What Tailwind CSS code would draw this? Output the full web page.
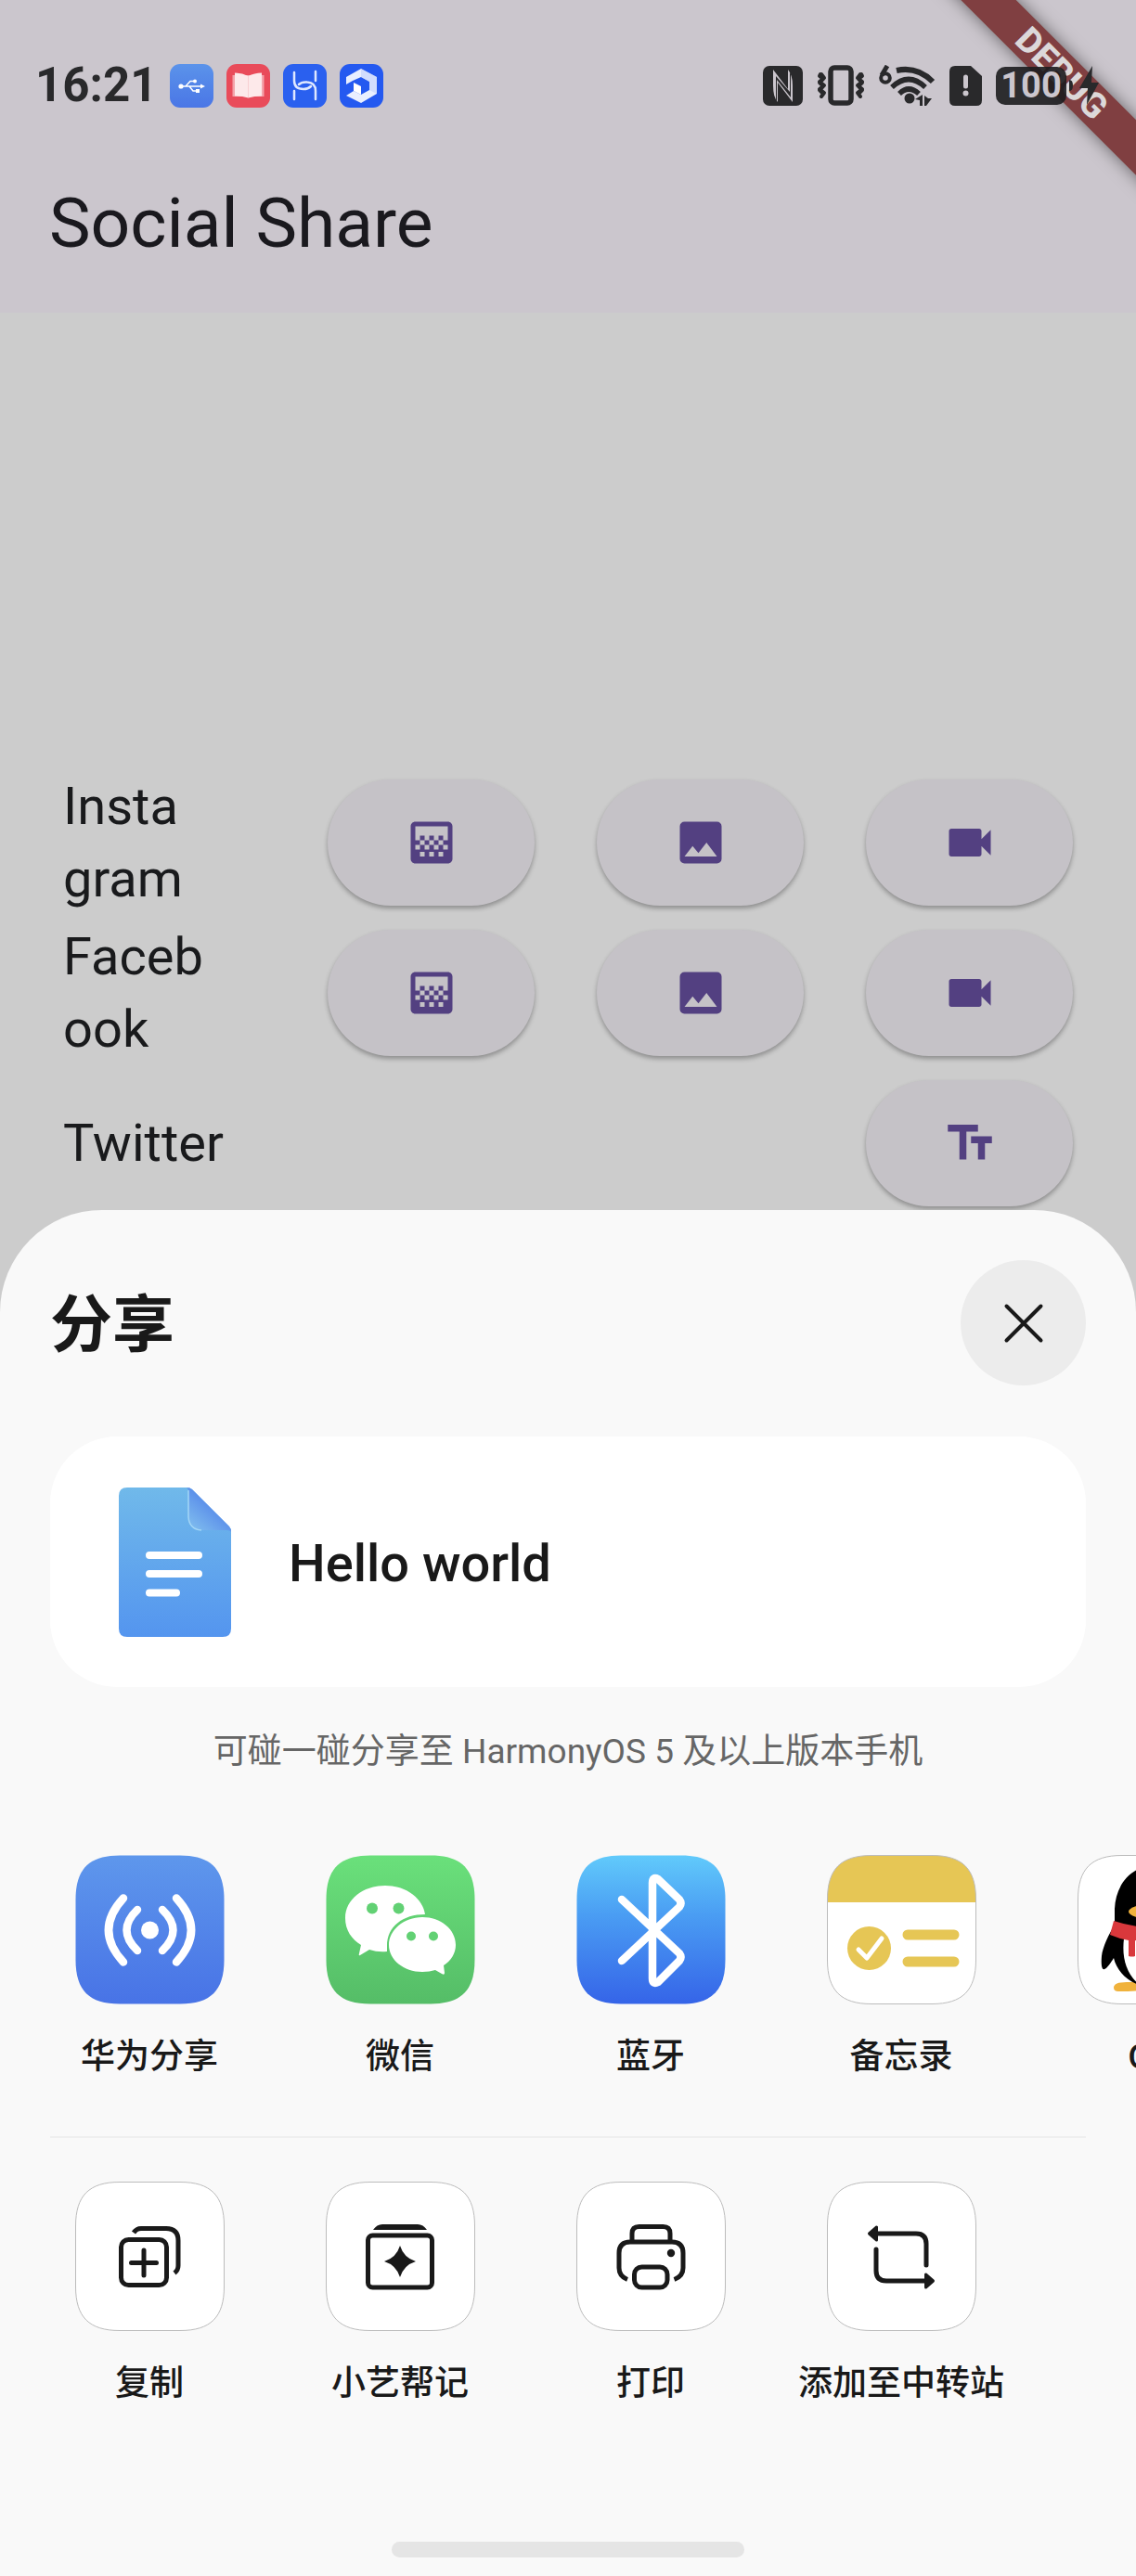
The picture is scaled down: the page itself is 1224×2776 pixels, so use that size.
<!DOCTYPE html>
<html lang="zh-CN">
<head>
<meta charset="utf-8">
<meta name="viewport" content="width=device-width, initial-scale=1">
<title>Social Share</title>
<script src="https://cdn.jsdelivr.net/npm/@tailwindcss/browser@4"></script>
</head>
<body class="relative flex min-h-screen flex-col overflow-x-hidden bg-[#cccccc] font-['Roboto','Noto_Sans_CJK_SC',sans-serif] text-[#191a1c]">

<!-- Shared icon shapes -->
<svg class="hidden" aria-hidden="true">
  <symbol id="i-gradient" viewBox="0 0 24 24"><path fill="currentColor" d="M11 9h2v2h-2zm-2 2h2v2H9zm4 0h2v2h-2zm2-2h2v2h-2zM7 9h2v2H7zm12-6H5c-1.100 0-2 .9-2 2v14c0 1.100.9 2 2 2h14c1.100 0 2-.9 2-2V5c0-1.100-.9-2-2-2zM9 18H7v-2h2v2zm4 0h-2v-2h2v2zm4 0h-2v-2h2v2zm2-7h-2v2h2v2h-2v-2h-2v2h-2v-2h-2v2H9v-2H7v2H5v-2h2v-2H5V5h14v6z"/></symbol>
  <symbol id="i-image" viewBox="0 0 24 24"><path fill="currentColor" d="M19 3H5a2 2 0 0 0-2 2v14a2 2 0 0 0 2 2h14a2 2 0 0 0 2-2V5a2 2 0 0 0-2-2zM5 18l3.500-4.500 2.500 3 3.500-4.500 4.500 6z"/></symbol>
  <symbol id="i-video" viewBox="0 0 24 24"><path fill="currentColor" d="M17 10.500V7c0-.55-.45-1-1-1H4c-.55 0-1 .45-1 1v10c0 .55.45 1 1 1h12c.55 0 1-.45 1-1v-3.500l4 4v-11l-4 4z"/></symbol>
  <symbol id="i-size" viewBox="0 0 24 24"><path fill="currentColor" d="M2.500 4v3h5v12h3V7h5V4h-13zm19 5h-9v3h3v7h3v-7h3V9z"/></symbol>
</svg>

<header class="bg-[#cbc6cd]">
  <div class="relative z-20 flex h-[184px] items-center justify-between pl-[38px] pr-[40px] text-[#29292b]">
    <div class="flex items-center gap-[14px]">
      <time class="w-[131px] text-[51px] font-bold leading-[60px]">16:21</time>
      <svg class="size-[47px]" viewBox="0 0 47 47"><defs><linearGradient id="usb" x2="0" y2="1"><stop stop-color="#5b93ea"/><stop offset="1" stop-color="#4a76e6"/></linearGradient></defs><rect width="47" height="47" rx="11" fill="url(#usb)"/><g fill="none" stroke="#fff" stroke-width="1.500"><path d="M11 24h24M17 24l5-5.500h5M21 24l4 5h5"/></g><circle cx="12" cy="24" r="2.600" fill="#fff"/><circle cx="27" cy="18.500" r="2" fill="#fff"/><path d="M28 27h4v4h-4zM33 21.500l5 2.500-5 2.500z" fill="#fff"/></svg>
      <svg class="size-[47px]" viewBox="0 0 47 47"><rect width="47" height="47" rx="11" fill="#e94b5a"/><path fill="#f4a3aa" d="M6.500 12h34v23h-34z"/><path fill="#fde9ea" d="M9 9.500q8 0 14.500 3.500 6.500-3.500 14.500-3.500v25q-8 0-14.500 2-6.500-2-14.500-2z"/><path stroke="#f8cfd2" d="M23.500 13v23"/></svg>
      <svg class="size-[47px]" viewBox="0 0 47 47"><rect width="47" height="47" rx="11" fill="#2a60ef"/><path fill="none" stroke="#dfe8ff" stroke-width="2.500" stroke-linecap="round" d="M12 9v9q0 9 10 9 5 0 8-3M35 8v10M12 38v-9M35 38v-9q0-9-9-9.500-6-.5-9 2.500"/></svg>
      <svg class="size-[47px]" viewBox="0 0 47 47"><rect width="47" height="47" rx="11" fill="#2459f0"/><path fill="#e9efff" d="M7 14 23 5l17 9v18l-17 10-16-8 8-5 8 4 9-5V19l-9-5-9 4-7 4z"/><path fill="#b9cbfb" d="M23 5v9l9 5v9l8 4V14z" opacity=".5"/><path fill="#fff" d="m15 20 8 4v9l-8-4z"/></svg>
    </div>
    <div class="flex items-center gap-[15px]">
      <svg class="h-[43px] w-[43px]" viewBox="0 0 43 43"><rect width="43" height="43" rx="7" fill="currentColor"/><path fill="#cbc6cd" d="M11 4 27 25V4q5 6 5 17v18L16 18v21q-5-5-5-18z"/><path fill="currentColor" d="M14 11v26l1 1V15l15 19V9l-1-3v22z"/></svg>
      <svg class="h-[44px] w-[52px]" viewBox="0 0 52 44"><rect x="15" y="3" width="22" height="38" rx="4" fill="none" stroke="currentColor" stroke-width="5.500"/><path fill="none" stroke="currentColor" stroke-width="4" stroke-linejoin="round" stroke-linecap="round" d="m5 10 3 4-5 4 5 4-5 4 5 4-3 4M47 10l-3 4 5 4-5 4 5 4-5 4 3 4M4 10l-1 2 4 3-4 4 4 4-4 4 4 4-2 3M48 10l1 2-4 3 4 4-4 4 4 4-4 4 2 3"/></svg>
      <svg class="h-[44px] w-[61px]" viewBox="0 0 61 44"><g fill="none" stroke="currentColor" stroke-width="5"><path d="M9 1 3 11"/><circle cx="7" cy="14" r="4.800" stroke-width="4"/><path d="M19 6q22-5 39 12" stroke-width="6"/><path d="M14 24q18-17 36 0" stroke-width="5.500"/><path d="M22 31q10-10 21 0" stroke-width="5.500"/></g><circle cx="33" cy="36" r="5.500" fill="currentColor"/><path fill="currentColor" d="m39 37 8-5v12h-3v-6zM49 33v11h2l6-8h-4z"/></svg>
      <svg class="h-[43px] w-[35px]" viewBox="0 0 35 43"><path fill="currentColor" d="M6 0h17l12 11v26q0 6-6 6H6q-6 0-6-6V6q0-6 6-6z"/><path stroke="#cbc6cd" stroke-width="5" stroke-linecap="round" d="M17.500 12v10"/><circle cx="17.500" cy="29.500" r="3" fill="#cbc6cd"/></svg>
      <div class="flex items-center gap-[3px]">
        <span class="flex h-[41px] w-[76px] items-center justify-center rounded-[10px] bg-[#1c1c1e]/90 text-[38px] font-bold leading-none text-[#cbc6cd]">100</span>
        <svg class="h-[42px] w-[32px]" viewBox="0 0 32 42"><path fill="currentColor" d="M0 15q4 0 4 6t-4 6zM25 0 11 24h9l-1 18 13-24h-8z"/></svg>
      </div>
    </div>
  </div>
  <h1 class="flex h-[153px] items-center pb-[40px] pl-[53px] text-[75px] leading-[107px] text-[#1a191e]">Social Share</h1>
</header>

<!-- Corner ribbon -->
<div class="absolute right-0 top-0 z-10 size-[240px] overflow-hidden">
  <div class="absolute -right-[80px] top-[58px] flex h-[42px] w-[320px] rotate-45 items-center justify-center bg-[#803f41] text-[38px] font-extrabold leading-none text-[#dcd8d9] shadow-[0_0_18px_rgba(0,0,0,0.5)]">DEBUG</div>
</div>

<main class="flex flex-col px-[68px] pt-[490px] text-[56px] leading-[78px]">
  <section class="grid h-[162px] grid-cols-[218px_repeat(3,1fr)] items-center gap-x-[67px]">
    <h2>Insta<br>gram</h2>
    <button aria-label="Instagram gradient" class="flex h-[136px] items-center justify-center rounded-full bg-[#c5c2c7] text-[#534081] shadow-[0_3px_5px_rgba(0,0,0,0.3)]"><svg class="size-[60px]"><use href="#i-gradient"/></svg></button>
    <button aria-label="Instagram image" class="flex h-[136px] items-center justify-center rounded-full bg-[#c5c2c7] text-[#534081] shadow-[0_3px_5px_rgba(0,0,0,0.3)]"><svg class="size-[60px]"><use href="#i-image"/></svg></button>
    <button aria-label="Instagram video" class="flex h-[136px] items-center justify-center rounded-full bg-[#c5c2c7] text-[#534081] shadow-[0_3px_5px_rgba(0,0,0,0.3)]"><svg class="size-[60px]"><use href="#i-video"/></svg></button>
  </section>
  <section class="grid h-[162px] grid-cols-[218px_repeat(3,1fr)] items-center gap-x-[67px]">
    <h2>Faceb<br>ook</h2>
    <button aria-label="Facebook gradient" class="flex h-[136px] items-center justify-center rounded-full bg-[#c5c2c7] text-[#534081] shadow-[0_3px_5px_rgba(0,0,0,0.3)]"><svg class="size-[60px]"><use href="#i-gradient"/></svg></button>
    <button aria-label="Facebook image" class="flex h-[136px] items-center justify-center rounded-full bg-[#c5c2c7] text-[#534081] shadow-[0_3px_5px_rgba(0,0,0,0.3)]"><svg class="size-[60px]"><use href="#i-image"/></svg></button>
    <button aria-label="Facebook video" class="flex h-[136px] items-center justify-center rounded-full bg-[#c5c2c7] text-[#534081] shadow-[0_3px_5px_rgba(0,0,0,0.3)]"><svg class="size-[60px]"><use href="#i-video"/></svg></button>
  </section>
  <section class="grid h-[153px] grid-cols-[218px_repeat(3,1fr)] gap-x-[67px] pt-[13px]">
    <h2 class="pt-[29px]">Twitter</h2>
    <button aria-label="Twitter text" class="col-start-4 flex h-[136px] items-center justify-center rounded-full bg-[#c5c2c7] text-[#534081] shadow-[0_3px_5px_rgba(0,0,0,0.3)]"><svg class="size-[60px]"><use href="#i-size"/></svg></button>
  </section>
</main>

<!-- Share sheet -->
<section aria-label="分享" class="relative flex grow flex-col rounded-t-[110px] bg-[#f9f9f9] pt-[54px] text-[#191919]">
  <div class="flex items-center justify-between px-[54px]">
    <h2 class="pt-1 text-[67px] font-bold leading-[96px]">分享</h2>
    <button aria-label="关闭" class="flex size-[135px] items-center justify-center rounded-full bg-[#ececec]"><svg class="size-[44px]" viewBox="0 0 44 44"><path stroke="currentColor" stroke-width="4" stroke-linecap="round" d="m3.500 3.500 37 37m0-37-37 37"/></svg></button>
  </div>

  <div class="mx-[54px] mt-[55px] flex h-[270px] items-center gap-[62px] rounded-[72px] bg-white pl-[74px]">
    <svg class="h-[161px] w-[121px]" viewBox="0 0 121 161"><defs><linearGradient id="doc" x2="0" y2="1"><stop stop-color="#70b9ea"/><stop offset="1" stop-color="#5495ef"/></linearGradient><linearGradient id="fold" x1=".1" y1=".9" x2=".55" y2=".4"><stop stop-color="#7fbcee"/><stop offset="1" stop-color="#5b8fea"/></linearGradient></defs><path fill="url(#doc)" d="M9 0h64q4 0 6 2l40 40q2 2 2 6v104q0 9-9 9H9q-9 0-9-9V9q0-9 9-9z"/><path fill="url(#fold)" d="M73 0q4 0 6 2l40 40q2 2 2 6-1-2-5-2H89q-14-1-14-14V5q0-4-2-5z"/><path fill="none" stroke="#a3d6f6" stroke-width="1.500" d="M75 3v29q1 13 14 14"/><path stroke="#fff" stroke-width="8" stroke-linecap="round" d="M33 73h53M33 93h53M33 113.500h29"/></svg>
    <p class="pt-1 text-[56px] font-medium leading-[78px]">Hello world</p>
  </div>

  <p class="mt-[44px] text-center text-[37px] leading-[52px] text-[#666666]">可碰一碰分享至 HarmonyOS 5 及以上版本手机</p>

  <nav aria-label="分享到应用" class="mt-[85px] flex overflow-hidden pl-[26px] text-[37px] font-medium leading-[54px]">
    <button class="flex w-[270px] shrink-0 flex-col items-center gap-[30px]">
      <svg class="size-[161px]" viewBox="0 0 161 161"><defs><linearGradient id="hw" x2="0" y2="1"><stop stop-color="#5e97ec"/><stop offset="1" stop-color="#4873e6"/></linearGradient></defs><path d="M48 .5h65C146 .5 160.500 15 160.500 48v65c0 33-14.500 47.500-47.500 47.500H48C15 160.500.5 146 .5 113V48C.5 15 15 .5 48 .5z" fill="url(#hw)"/><circle cx="80.500" cy="81" r="9.500" fill="#fff"/><path fill="none" stroke="#fff" stroke-width="8.500" stroke-linecap="round" d="M67 59q-23 22 0 44M94 59q23 22 0 44M52 46.500q-32 34.500 0 69M109 46.500q32 34.500 0 69"/></svg>
      <span>华为分享</span>
    </button>
    <button class="flex w-[270px] shrink-0 flex-col items-center gap-[30px]">
      <svg class="size-[161px]" viewBox="0 0 161 161"><defs><linearGradient id="wx" x2="0" y2="1"><stop stop-color="#6ae07b"/><stop offset="1" stop-color="#55bd67"/></linearGradient></defs><path d="M48 .5h65C146 .5 160.500 15 160.500 48v65c0 33-14.500 47.500-47.500 47.500H48C15 160.500.5 146 .5 113V48C.5 15 15 .5 48 .5z" fill="url(#wx)"/><path fill="#fff" d="M64 33c24 0 41 15 43 31-24 0-41 13-41 34v6q-10 1-19-2l-10 6q-2 1-1-2l2-9C28 91 21 81 21 68c0-20 19-35 43-35z"/><path fill="#fff" d="M104 67c20 0 36 13 36 30 0 9-5 17-13 22l1 8q0 3-3 1l-7-4q-6 2-14 2c-20 0-36-13-36-29s16-30 36-30z"/><g fill="#62d174"><circle cx="50" cy="57.500" r="6"/><circle cx="78.500" cy="57.500" r="6"/><circle cx="92" cy="87.500" r="5"/><circle cx="116" cy="87.500" r="5"/></g></svg>
      <span>微信</span>
    </button>
    <button class="flex w-[270px] shrink-0 flex-col items-center gap-[30px]">
      <svg class="size-[161px]" viewBox="0 0 161 161"><defs><linearGradient id="bt" x2="0" y2="1"><stop stop-color="#61cafb"/><stop offset=".4" stop-color="#4a9df3"/><stop offset="1" stop-color="#3564e8"/></linearGradient></defs><path d="M48 .5h65C146 .5 160.500 15 160.500 48v65c0 33-14.500 47.500-47.500 47.500H48C15 160.500.5 146 .5 113V48C.5 15 15 .5 48 .5z" fill="url(#bt)"/><path fill="none" stroke="#fff" stroke-width="8.500" stroke-linecap="round" stroke-linejoin="round" d="m49 48 62 58q3 4 0 8l-23 23q-6 3-6-4V30q0-7 6-4l23 22q3 4 0 8L49 114"/></svg>
      <span>蓝牙</span>
    </button>
    <button class="flex w-[270px] shrink-0 flex-col items-center gap-[30px]">
      <svg class="size-[161px]" viewBox="0 0 161 161"><defs><clipPath id="memo"><path d="M48 .5h65C146 .5 160.500 15 160.500 48v65c0 33-14.500 47.500-47.500 47.500H48C15 160.500.5 146 .5 113V48C.5 15 15 .5 48 .5z"/></clipPath></defs><g clip-path="url(#memo)"><path fill="#fff" d="M0 0h161v161H0z"/><path fill="#e6c655" d="M0 0h161v51H0z"/></g><circle cx="45.500" cy="100.500" r="23.500" fill="#e6c655"/><path fill="none" stroke="#fff" stroke-width="5" stroke-linecap="round" stroke-linejoin="round" d="m34 102 9 9 16-21"/><path stroke="#e6c655" stroke-width="11" stroke-linecap="round" d="M87 86h50M87 115h50"/><path d="M48 .5h65C146 .5 160.500 15 160.500 48v65c0 33-14.500 47.500-47.500 47.500H48C15 160.500.5 146 .5 113V48C.5 15 15 .5 48 .5z" fill="none" stroke="#bcbcbc"/></svg>
      <span>备忘录</span>
    </button>
    <button class="flex w-[270px] shrink-0 flex-col items-center gap-[30px]">
      <svg class="size-[161px]" viewBox="0 0 161 161"><path d="M48 .5h65C146 .5 160.500 15 160.500 48v65c0 33-14.500 47.500-47.500 47.500H48C15 160.500.5 146 .5 113V48C.5 15 15 .5 48 .5z" fill="#fff" stroke="#bcbcbc"/><path fill="#f0b23c" d="M53 137q-14 0-14 6 0 4 5 4 24 0 36-3 12 3 36 3 5 0 5-4 0-6-14-6z"/><path fill="#000" d="M81 12c-24 0-40 21-41 46v17c-6 10-13 24-14 34-1 12 1 15 3 14 3-1 7-7 10-12 4 17 20 31 42 32 22-1 38-15 42-32 3 5 7 11 10 12 2 1 4-2 3-14-1-10-8-24-14-34V58c-1-25-17-46-41-46z"/><path fill="#fff" d="M50 90q-4 34 18 51h26q22-17 18-51z"/><path fill="#d9383c" d="M39 71q42 14 84 0l5 15q-34 17-66 6v17q-3 1-7 0V92q-11-2-20-6z"/><ellipse cx="81" cy="61" rx="26" ry="8" fill="#f0b23c"/></svg>
      <span>QQ</span>
    </button>
  </nav>

  <hr class="mx-[54px] mt-[58px] border-t-2 border-[#efefef]">

  <nav aria-label="更多操作" class="mt-[47px] flex overflow-hidden pl-[26px] text-[37px] font-medium leading-[54px]">
    <button class="flex w-[270px] shrink-0 flex-col items-center gap-[30px]">
      <svg class="size-[161px]" viewBox="0 0 161 161"><path d="M48 .5h65C146 .5 160.500 15 160.500 48v65c0 33-14.500 47.500-47.500 47.500H48C15 160.500.5 146 .5 113V48C.5 15 15 .5 48 .5z" fill="#fff" stroke="#bcbcbc"/><g fill="none" stroke="#191919" stroke-width="5"><rect x="49.500" y="62.500" width="49" height="49" rx="8"/><path d="M63 55q3-4.500 8-4.500h27q13 0 13 13v27q0 5-4 8"/><path stroke-linecap="round" d="M60.500 87.500h27M74 74v27"/></g></svg>
      <span>复制</span>
    </button>
    <button class="flex w-[270px] shrink-0 flex-col items-center gap-[30px]">
      <svg class="size-[161px]" viewBox="0 0 161 161"><path d="M48 .5h65C146 .5 160.500 15 160.500 48v65c0 33-14.500 47.500-47.500 47.500H48C15 160.500.5 146 .5 113V48C.5 15 15 .5 48 .5z" fill="#fff" stroke="#bcbcbc"/><rect x="45.500" y="58" width="69" height="56" rx="5" fill="none" stroke="#191919" stroke-width="5"/><path fill="#191919" d="M51 52q4-6 10-6h38q6 0 10 6zM80 69q4 13 17 17-13 4-17 17-4-13-17-17 13-4 17-17z"/></svg>
      <span>小艺帮记</span>
    </button>
    <button class="flex w-[270px] shrink-0 flex-col items-center gap-[30px]">
      <svg class="size-[161px]" viewBox="0 0 161 161"><path d="M48 .5h65C146 .5 160.500 15 160.500 48v65c0 33-14.500 47.500-47.500 47.500H48C15 160.500.5 146 .5 113V48C.5 15 15 .5 48 .5z" fill="#fff" stroke="#bcbcbc"/><g fill="none" stroke="#191919" stroke-width="5"><path d="M60 65V56q0-7.500 7.500-7.500h26q7.500 0 7.500 7.500v9"/><path d="M55 105.500Q46 102 46 93V77q0-12 12-12h45q12 0 12 12v16q0 9-9.500 12.500"/><rect x="62.500" y="92" width="35.500" height="22" rx="8"/></g><circle cx="102" cy="77" r="4.200" fill="#191919"/></svg>
      <span>打印</span>
    </button>
    <button class="flex w-[270px] shrink-0 flex-col items-center gap-[30px]">
      <svg class="size-[161px]" viewBox="0 0 161 161"><path d="M48 .5h65C146 .5 160.500 15 160.500 48v65c0 33-14.500 47.500-47.500 47.500H48C15 160.500.5 146 .5 113V48C.5 15 15 .5 48 .5z" fill="#fff" stroke="#bcbcbc"/><g fill="none" stroke="#191919" stroke-width="5" stroke-linecap="round"><path d="M54 56h42q11 0 11 11v23M53 73v23q0 11 11 11h42"/></g><path fill="#191919" stroke="#191919" stroke-width="3" stroke-linejoin="round" d="m45.500 56 8-7v14zM114.500 107l-8-7v14z"/></svg>
      <span>添加至中转站</span>
    </button>
  </nav>

  <div class="mx-auto mb-5 mt-auto h-[17px] w-[31%] rounded-full bg-[#e5e5e5]"></div>
</section>
</body>
</html>
